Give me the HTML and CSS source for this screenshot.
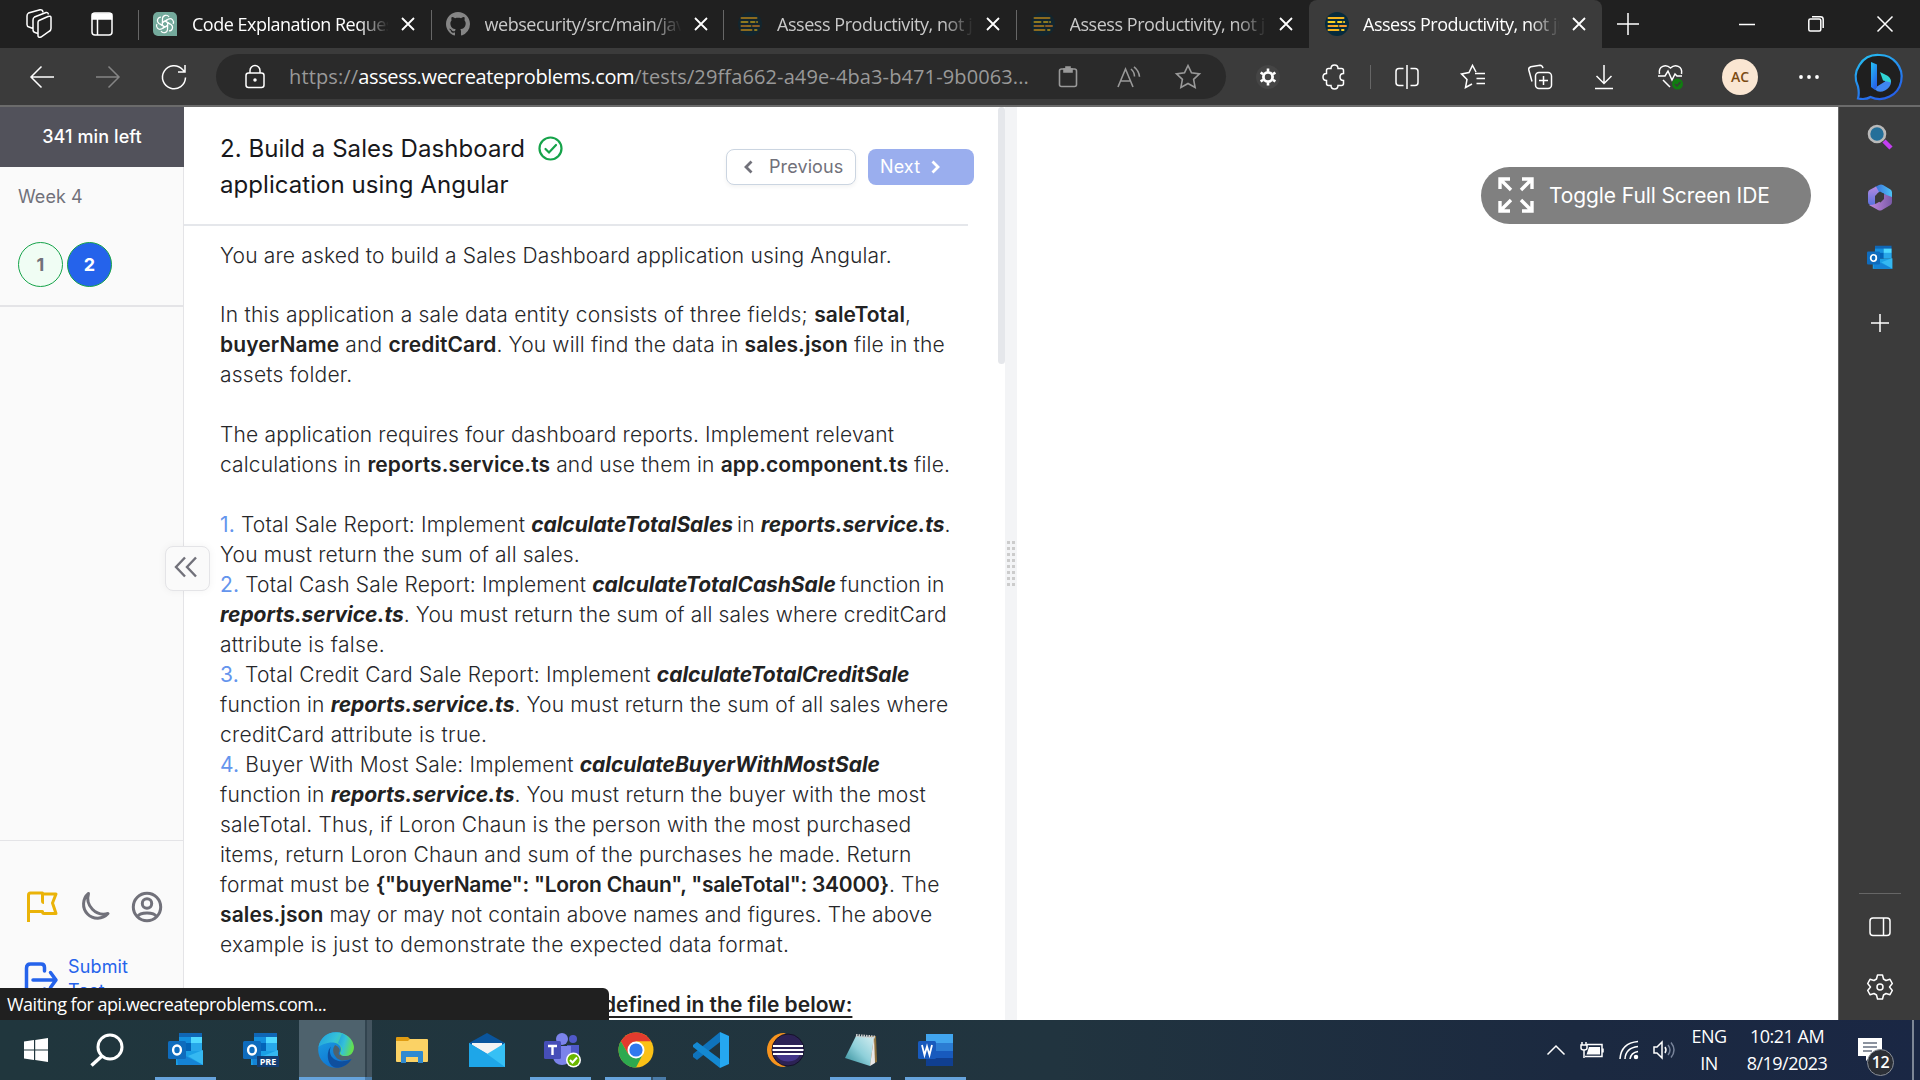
FILE: index.html
```html
<!DOCTYPE html>
<html lang="en">
<head>
<meta charset="utf-8">
<title>Assess Productivity</title>
<link rel="stylesheet" href="styles.css">
</head>
<body>
<svg class="defs" aria-hidden="true">
  <defs>
    <linearGradient id="bing" x1="0" y1="0" x2="0.5" y2="1"><stop offset="0" stop-color="#25c3f2"/><stop offset="1" stop-color="#2563eb"/></linearGradient>
    <linearGradient id="edgeA" x1="0" y1="0" x2="1" y2="0.4"><stop offset="0" stop-color="#1e9de0"/><stop offset="0.5" stop-color="#35c1d8"/><stop offset="1" stop-color="#63e04f"/></linearGradient>
    <linearGradient id="edgeB" x1="0" y1="0" x2="0.6" y2="1"><stop offset="0" stop-color="#1ea4e4"/><stop offset="1" stop-color="#0d6fd0"/></linearGradient>
    <linearGradient id="sheet" x1="0" y1="1" x2="1" y2="0"><stop offset="0" stop-color="#2b8794"/><stop offset="0.5" stop-color="#8fd0da"/><stop offset="1" stop-color="#d5eef1"/></linearGradient>
    <linearGradient id="loopA" x1="0" y1="0" x2="1" y2="0"><stop offset="0" stop-color="#3b6fd8"/><stop offset="1" stop-color="#4cc3f7"/></linearGradient>
    <linearGradient id="loopB" x1="0" y1="0" x2="0" y2="1"><stop offset="0" stop-color="#b58ae0"/><stop offset="1" stop-color="#4f6fe0"/></linearGradient>
    <linearGradient id="loopC" x1="0" y1="0" x2="1" y2="0"><stop offset="0" stop-color="#c48ae0"/><stop offset="1" stop-color="#7a5aa8"/></linearGradient>
    <symbol id="x" viewBox="0 0 16 16"><path d="M2 2l12 12M14 2L2 14" stroke="currentColor" stroke-width="1.8"/></symbol>
    <symbol id="assess" viewBox="0 0 24 24"><circle cx="12" cy="12" r="12" fill="#062b3d"/><g stroke-width="2" stroke-linecap="round"><path d="M3.500 6h15M3.500 14h9M3.500 18h10" stroke="#f5b51f"/><path d="M3.500 10h6M13 10h3.500M19 10h.1M17 18h1.500" stroke="#fbd321"/><path d="M15 14h6M5 14h3" stroke="#f59a2e"/></g></symbol>
    <symbol id="outlook" viewBox="0 0 36 36"><path d="M11 1h23v17H11z" fill="#1066b5"/><path d="M11 5h12v6H11z" fill="#1490df"/><path d="M23 5h11v6H23z" fill="#50d9ff"/><path d="M11 11h12v8H11z" fill="#0364b8"/><path d="M23 11h11v8H23z" fill="#28a8ea"/><path d="M8 33V19h27v14z" fill="#1a9fe5"/><path d="M35 18v15L20 24z" fill="#35b8f1"/><path d="M8 19l27 14H10z" fill="#1583d5"/><rect x="0" y="9" width="18" height="18" rx="1.500" fill="#0f6cbd"/><ellipse cx="9" cy="18" rx="3.900" ry="4.500" fill="none" stroke="#fff" stroke-width="2.400"/></symbol>
  </defs>
</svg>
<div class="screen">
  <header class="tabstrip">
    <div class="tab-actions">
      <svg width="26" height="30" viewBox="0 0 26 30" class="line"><path d="M13 11.500l9-4q3-1 3 1v11q0 2-2 3L15 28q-3 1-3-1.500V13.500q0-1.500 1-2z"/><path d="M12 24.500l-3-1q-2-.5-2-3V11q0-2 1.500-3L20 3.500q2-.5 2.500 2M7 19.500l-4-1.500q-2-.5-2-2.500V7q0-2 1.500-3L14 .800q2.500-.5 3 2.500"/></svg>
      <svg width="22" height="26" viewBox="0 0 22 26" class="line"><rect x="1" y="2" width="20" height="22" rx="3"/><path d="M1.500 3h19v5h-19z" fill="#fff"/><path d="M6.500 8v16"/></svg>
    </div>
    <div class="tab">
      <svg class="favicon" viewBox="0 0 24 24"><path d="M5 0h14a5 5 0 015 5v19H5a5 5 0 01-5-5V5a5 5 0 015-5z" fill="#74aa9c"/><g fill="none" stroke="#fff" stroke-width="1.200"><path id="kn" d="M9.500 10.500V6.500a3.500 3.500 0 016.500-1.500M9.500 10.500l2.500-1.500 5 3"/><use href="#kn" transform="rotate(60 12 12)"/><use href="#kn" transform="rotate(120 12 12)"/><use href="#kn" transform="rotate(180 12 12)"/><use href="#kn" transform="rotate(240 12 12)"/><use href="#kn" transform="rotate(300 12 12)"/></g></svg>
      <span class="tab-title bright">Code Explanation Request</span><svg class="close"><use href="#x"/></svg>
    </div>
    <div class="tab">
      <svg class="favicon" viewBox="0 0 16 16"><path fill="#858585" d="M8 0C3.580 0 0 3.580 0 8c0 3.540 2.290 6.530 5.470 7.590.4.070.55-.17.55-.38 0-.19-.01-.82-.01-1.490-2.010.37-2.530-.49-2.690-.94-.09-.23-.48-.94-.82-1.130-.28-.15-.68-.52-.01-.53.63-.01 1.080.58 1.230.82.72 1.210 1.870.87 2.330.66.07-.52.28-.87.51-1.070-1.780-.2-3.640-.89-3.640-3.950 0-.87.31-1.590.82-2.150-.08-.2-.36-1.020.08-2.120 0 0 .67-.21 2.200.82.64-.18 1.320-.27 2-.27s1.360.09 2 .27c1.530-1.040 2.200-.82 2.200-.82.44 1.100.16 1.920.08 2.120.51.56.82 1.270.82 2.150 0 3.070-1.870 3.750-3.650 3.950.29.25.54.73.54 1.480 0 1.070-.01 1.930-.01 2.200 0 .21.15.46.55.38A8.010 8.010 0 0016 8c0-4.420-3.580-8-8-8z"/></svg>
      <span class="tab-title">websecurity/src/main/java</span><svg class="close"><use href="#x"/></svg>
    </div>
    <div class="tab"><svg class="favicon dim"><use href="#assess"/></svg><span class="tab-title">Assess Productivity, not just</span><svg class="close"><use href="#x"/></svg></div>
    <div class="tab"><svg class="favicon dim"><use href="#assess"/></svg><span class="tab-title">Assess Productivity, not just</span><svg class="close"><use href="#x"/></svg></div>
    <div class="tab active"><svg class="favicon"><use href="#assess"/></svg><span class="tab-title bright">Assess Productivity, not just</span><svg class="close"><use href="#x"/></svg></div>
    <svg class="new-tab line" width="22" height="22" viewBox="0 0 22 22"><path d="M11 0v22M0 11h22"/></svg>
    <div class="window-buttons">
      <svg width="16" height="16" viewBox="0 0 16 16" class="line"><path d="M0 8.500h16"/></svg>
      <svg width="16" height="16" viewBox="0 0 16 16" class="line"><rect x=".8" y="3" width="12" height="12" rx="1.500"/><path d="M4 .8h8.500q2.700 0 2.700 2.700V12"/></svg>
      <svg width="16" height="16" viewBox="0 0 16 16" class="line"><path d="M.5.500l15 15M15.500.500l-15 15"/></svg>
    </div>
  </header>

  <div class="toolbar">
    <div class="nav-buttons">
      <svg width="26" height="26" viewBox="0 0 26 26" class="line"><path d="M25 13H2M12.500 2.500L2 13l10.500 10.500"/></svg>
      <svg width="26" height="26" viewBox="0 0 26 26" class="line faded"><path d="M1 13h23M13.500 2.500L24 13 13.500 23.500"/></svg>
      <svg width="26" height="26" viewBox="0 0 26 26" class="line"><path d="M24.500 13.500A11.500 11.500 0 1 1 21.500 5.500L24 8M24 1v7h-7"/></svg>
    </div>
    <div class="address">
      <svg width="20" height="24" viewBox="0 0 20 24" class="line"><rect x="1" y="8" width="18" height="14.500" rx="2.500"/><path d="M5 8V5.500a5 5 0 0110 0V8"/><circle cx="10" cy="15" r="1" fill="#fff"/></svg>
      <span class="url">https://<b>assess.wecreateproblems.com</b>/tests/29ffa662-a49e-4ba3-b471-9b0063...</span>
      <div class="address-icons">
        <svg width="20" height="22" viewBox="0 0 20 22"><rect x="1.500" y="3" width="17" height="17.500" rx="2"/><path d="M6 3h8v3H6zM8 1h4v3H8z" fill="#999"/></svg>
        <svg width="24" height="22" viewBox="0 0 24 22"><path d="M1 21L8.500 3 16 21M3.500 15h10M14 3q3.500 3 3.500 7.500M17 .8q5 4 5.500 10"/></svg>
        <svg width="26" height="25" viewBox="0 0 26 25"><path d="M13 1.500l3.500 7.300 8 1.100-5.900 5.500 1.500 8L13 19.500l-7.100 3.900 1.500-8L1.500 9.900l8-1.100z"/></svg>
      </div>
    </div>
    <div class="extensions">
      <svg width="24" height="24" viewBox="0 0 24 24"><circle cx="12" cy="12" r="12" fill="#454545"/><circle cx="12" cy="12" r="4.600" fill="none" stroke="#fff" stroke-width="2.800"/><path d="M12 3.500v3M12 17.500v3M4.600 7.700l2.600 1.500M16.800 14.800l2.600 1.500M19.400 7.700l-2.600 1.500M7.200 14.800l-2.600 1.500" stroke="#fff" stroke-width="2.600"/></svg>
      <svg class="puzzle line" width="24" height="26" viewBox="0 0 24 26"><path d="M6.500 4.500H9Q9 1 12.500 1T16 4.500h3.500q2 0 2 2v3Q18 9.500 18 13t3.500 3.500v3q0 2-2 2H16q0 3.500-3.500 3.500T9 21.500H6.500q-2 0-2-2v-3Q1 16.500 1 13t3.500-3.500v-3q0-2 2-2z"/></svg>
      <i class="divider"></i>
      <svg width="24" height="24" viewBox="0 0 24 24" class="line"><path d="M12 0v24M8.500 3.500H4Q1 3.500 1 6.500v11q0 3 3 3h4.500M15.500 3.500H20q3 0 3 3v11q0 3-3 3h-4.500"/></svg>
      <svg width="26" height="25" viewBox="0 0 26 25" class="line"><path d="M16 8l-3.500-6.500L9 8.500l-7.500 1.400L7 15.500l-1.500 8L12 20M15 9.500h10M16.500 14.500H25M16.500 19.500H25" /></svg>
      <svg width="26" height="26" viewBox="0 0 26 26" class="line"><rect x="8.500" y="8.500" width="16" height="16" rx="3.500"/><path d="M16.500 12v9M12 16.500h9M5 17.500L1.800 6q-.5-2.500 2-3.300L13 1.200q2.300 0 3 3"/></svg>
      <svg width="20" height="26" viewBox="0 0 20 26" class="line"><path d="M10 1v18M2.500 12l7.500 7.500 7.500-7.500M1 24.500h18"/></svg>
      <svg class="heart line" width="28" height="28" viewBox="0 0 28 28"><path d="M2.500 11C1 3 9 .500 13.500 5 18 .500 26 3 24.500 11M1 13h7l3-5 4 9 3-6 2 2h5M6 17l7 7"/><circle cx="20.500" cy="21" r="5.500" fill="#107c10" stroke="none"/><path d="M18 21l2 2 3.500-4" stroke="#3a3a3a"/></svg>
      <span class="avatar">AC</span>
      <svg class="more" width="22" height="6" viewBox="0 0 22 6"><g fill="#fff"><circle cx="3" cy="3" r="1.900"/><circle cx="11" cy="3" r="1.900"/><circle cx="19" cy="3" r="1.900"/></g></svg>
      <svg class="bing" width="46" height="46" viewBox="0 0 46 46"><path d="M23 1a22 22 0 11-8.500 42Q10 46 2 44.500q1.500-5 0-12A22 22 0 0123 1z" fill="#1f1f1f" stroke="url(#bing)" stroke-width="2.200"/><path d="M15 8l6 2.500v22l-2 3.500-4-3z" fill="url(#bing)"/><path d="M31 22q4 2 4 7-1 5-6 7.500-6 3-10-1l2-3 8-5z" fill="#3f86f0"/><path d="M24 18l7 3.500q4 2 4 7l-8-2z" fill="#30d5d5"/></svg>
    </div>
  </div>

  <div class="browser-body">
    <main class="page">
      <aside class="sidebar">
        <div class="timer">341 min left</div>
        <section class="week"><p>Week 4</p><div class="questions"><span class="done">1</span><span class="current">2</span></div></section>
        <section class="side-foot">
          <div class="tools">
            <svg width="32" height="32" viewBox="0 0 32 32" stroke="#eab308"><path d="M2.500 31V4q0-2 2-2h12v8q0 1.500 1.500 1.500M16.500 3H30l-3.500 9L30 22.500H18q-1.500 0-1.500-2v0H2.500"/></svg>
            <svg width="32" height="32" viewBox="0 0 32 32" stroke="#71717a"><path d="M10.500 2.500A14 14 0 1030 22.500 16 16 0 0110.500 2.500z"/></svg>
            <svg width="32" height="32" viewBox="0 0 32 32" stroke="#71717a"><circle cx="16" cy="16" r="13.700"/><circle cx="16" cy="12.500" r="4.700"/><path d="M6.500 25.500q2-3.500 9.500-3.500t9.500 3.500"/></svg>
          </div>
          <div class="submit">
            <svg width="34" height="34" viewBox="0 0 34 34"><path d="M20.500 9V5.500q0-3.500-3.500-3.500H6.500Q2.500 2 2.500 6v24q0 3 4 3H17q3.500 0 3.500-3.500V27M9 18h22M26.500 10.500L32 18l-5.500 7.500"/></svg>
            <span>Submit Test</span>
          </div>
        </section>
        <button class="collapse"><svg width="24" height="22" viewBox="0 0 24 22"><path d="M11 1.500L2 11l9 9.500M22 1.500L13 11l9 9.500"/></svg></button>
      </aside>

      <section class="problem">
        <div class="problem-head">
          <h1>2. Build a Sales Dashboard<br>application using Angular</h1>
          <svg class="check" width="25" height="25" viewBox="0 0 25 25"><circle cx="12.500" cy="12.500" r="11"/><path d="M7.500 13l3.500 3.500 7-7.500"/></svg>
          <div class="pager">
            <button class="prev"><svg width="9" height="14" viewBox="0 0 9 14"><path d="M7.500 1.500L2 7l5.500 5.500"/></svg>Previous</button>
            <button class="next">Next<svg width="9" height="14" viewBox="0 0 9 14"><path d="M1.500 1.500L7 7l-5.500 5.500"/></svg></button>
          </div>
        </div>
        <div class="statement">
          <p>You are asked to build a Sales Dashboard application using Angular.</p>
          <p><span class="loose">In this application a sale data entity consists of three fields; </span><b>saleTotal</b>,<br><b>buyerName</b> and <b>creditCard</b>. You will find the data in <b>sales.json</b> file in the<br><span class="loose">assets folder.</span></p>
          <p>The application requires four dashboard reports. Implement relevant<br>calculations in <b>reports.service.ts</b> and use them in <b>app.component.ts</b> file.</p>
          <p><i>1.</i> Total Sale Report: Implement <em class="snug">calculateTotalSales</em> in <em>reports.service.ts</em>.<br>You must return the sum of all sales.<br>
          <i>2.</i> Total Cash Sale Report: Implement <em class="snug">calculateTotalCashSale</em> function in<br><em>reports.service.ts</em>. You must return the sum of all sales where creditCard<br><span class="looser">attribute is false.</span><br>
          <i>3.</i> <span class="loose">Total Credit Card Sale Report: Implement </span><em>calculateTotalCreditSale</em><br>function in <em>reports.service.ts</em>. You must return the sum of all sales where<br><span class="looser">creditCard attribute is true.</span><br>
          <i>4.</i> Buyer With Most Sale: Implement <em>calculateBuyerWithMostSale</em><br>function in <em>reports.service.ts</em>. <span class="loose">You must return the buyer with the most</span><br>saleTotal. Thus, if Loron Chaun is the person with the most purchased<br>items, return Loron Chaun and sum of the purchases he made. Return<br>format must be <b class="json">{"buyerName": "Loron Chaun", "saleTotal": 34000}</b>. The<br><b>sales.json</b> <span class="tight">may or may not contain above names and figures. The above</span><br><span class="looser">example is just to demonstrate the expected data format.</span></p>
          <p class="contract"><b><u>defined in the file below:</u></b></p>
        </div>
      </section>
      <div class="scroll-track"><div class="scroll-thumb"></div></div>
      <div class="gutter"><svg width="8" height="46" viewBox="0 0 8 46"><path d="M1.500 0v46M6.500 0v46" stroke="#ccc" stroke-width="3" stroke-dasharray="3 3"/></svg></div>
      <section class="ide">
        <button class="fullscreen"><svg width="36" height="36" viewBox="0 0 36 36"><path d="M2 12V2h10M2 2l11 11M24 2h10v10M34 2L23 13M2 24v10h10M2 34l11-11M34 24v10H24M34 34L23 23"/></svg>Toggle Full Screen IDE</button>
      </section>
      <div class="status">Waiting for api.wecreateproblems.com...</div>
    </main>
    <aside class="edge-bar">
      <svg width="26" height="26" viewBox="0 0 26 26"><path d="M17 17l7 7" stroke="#c43df2" stroke-width="4.500"/><circle cx="10" cy="10" r="8" fill="#246f99" stroke="#b9b9b9" stroke-width="2.600"/></svg>
      <svg width="26" height="27" viewBox="0 0 26 27"><path d="M8 3l4-2q2-1 4 0l7.500 4.500Q25 6.500 25 8.500V16l-9-7-6-1z" fill="url(#loopA)"/><path d="M9 2.500L2.500 6Q1 7 1 9v9q0 2 2 3l5 2V12l4-4z" fill="url(#loopB)"/><path d="M25 13v5q0 2-1.500 3L15 26q-2 1-4 0l-9-5q8 0 13-6l2-5z" fill="url(#loopC)"/><path d="M10 10l3-2.500 4 2.500v5l-3.500 3.500L9 16z" fill="#3a3a3a"/></svg>
      <svg width="26" height="26"><use href="#outlook"/></svg>
      <svg class="add" width="20" height="20" viewBox="0 0 20 20"><path d="M10 1v18M1 10h18"/></svg>
      <div class="edge-foot">
        <svg width="22" height="20" viewBox="0 0 22 20" class="line"><rect x="1" y="1" width="20" height="17.500" rx="3"/><path d="M14.500 1v17.500"/></svg>
        <svg width="26" height="26" viewBox="0 0 26 26" class="line"><path d="M10.500 1h5l1 4 2.500 1.500 4-1.200 2.300 4.200-2.800 3.500 2.800 3.500-2.300 4.200-4-1.200-2.500 1.500-1 4h-5l-1-4L7 19.500l-4 1.200L.7 16.500 3.500 13 .7 9.500 3 5.300l4 1.200L9.500 5z" stroke-linejoin="round"/><circle cx="13" cy="13" r="3"/></svg>
      </div>
    </aside>
  </div>

  <footer class="taskbar">
    <div class="apps">
      <div class="app start"><svg width="24" height="24" viewBox="0 0 24 24"><path fill="#fff" d="M0 3.500l10-1.400v9.400H0zM11.200 2L24 0v11.500H11.200zM0 12.600h10V22L0 20.600zM11.200 12.600H24V24l-12.800-1.900z"/></svg></div>
      <div class="app search"><svg width="34" height="34" viewBox="0 0 34 34"><circle cx="20" cy="14" r="12" fill="none" stroke="#fff" stroke-width="3"/><path d="M12 23L1.500 32.500" stroke="#fff" stroke-width="3.500"/></svg></div>
      <div class="app open"><svg width="36" height="36"><use href="#outlook"/></svg></div>
      <div class="app"><svg width="36" height="36" viewBox="0 0 36 36"><use href="#outlook" width="36" height="36"/><rect x="14" y="24" width="22" height="11" fill="#123d73"/><text x="25" y="32.500" text-anchor="middle" class="pre">PRE</text></svg></div>
      <div class="app focused"><svg width="36" height="36" viewBox="0 0 36 36"><circle cx="18" cy="18" r="17.800" fill="url(#edgeB)"/><path d="M24 14c4 0 5 7-2 8-1 5 4 7 14 5V10z" fill="#4e626d"/><path d="M.5 15C2 6 9 .2 18 .2c10 0 17.800 7 17.800 14.800 0 6-4 9-8.500 9-5 0-6-2-5-4 2-3 0-9-7-9.500C8 10.300 3 13 .5 15z" fill="url(#edgeA)"/><path d="M13 14.500c-4 9 4 16 13 14.500 3 0 6-1.500 7.500-2-3 5.500-9 8.800-15.500 8.800C9 34 7.500 20 13 14.500z" fill="#0f4f9e"/><path d="M17 13q-3.500 5-.5 10 2 4 7 5.500 4 .5 9-2l2-.5V24q-3 1-8 1-4-.5-5.500-2.500-1-1.500.5-3 1-4-4.500-6.500z" fill="#4e626d"/><path d="M20 11q6 5 3 9-1.500 3 4.500 4 8-.5 8.300-9Q34 6 24 1.500z" fill="url(#edgeA)"/></svg></div>
      <div class="app"><svg width="34" height="28" viewBox="0 0 34 28"><path d="M1 5V2q0-1 1-1h11l3 3v1z" fill="#e09c12"/><path d="M1 5h12l2-2h17q1 0 1 1v21q0 1-1 1H2q-1 0-1-1z" fill="#fbd265"/><path d="M6 27V16q0-1 1-1h20q1 0 1 1v11h-5v-6H11v6z" fill="#2f8ad0"/></svg></div>
      <div class="app"><svg width="36" height="34" viewBox="0 0 36 34"><path d="M0 10L18 0l18 10v12H0z" fill="#0a559d"/><path d="M3 10h30v8L18 24 3 18z" fill="#f3f3f3"/><path d="M0 10l22 13L36 34H0z" fill="#1c95dd"/><path d="M36 10L18 21 0 34h36z" fill="#36c0f5"/><path d="M0 10l18 11 18 13H0z" fill="#1ea6e8"/></svg></div>
      <div class="app open"><svg width="38" height="36" viewBox="0 0 38 36"><circle cx="19" cy="7" r="6" fill="#7b83eb"/><circle cx="30" cy="7" r="4" fill="#5059c9"/><path d="M24 13h12v11q-2 6-8 6h-4z" fill="#5059c9"/><path d="M10 14h18v12q-2 7-9 7t-9-7z" fill="#7b83eb"/><rect x="1" y="9" width="17" height="18" rx="1.500" fill="#464eb8"/><path d="M5 14h9M9.500 14v9" stroke="#fff" stroke-width="2.400"/><circle cx="30.500" cy="28" r="7.500" fill="#fff"/><circle cx="30.500" cy="28" r="6" fill="#6bb700"/><path d="M27 28l2.500 2.500 4.500-5" stroke="#fff" stroke-width="2" fill="none"/></svg></div>
      <div class="app open split"><svg width="36" height="36" viewBox="0 0 36 36"><circle cx="18" cy="18" r="17.500" fill="#fbc116"/><path d="M2.800 9.300A17.500 17.500 0 0133.200 9.300H18L10.500 22.500z" fill="#e33b2e"/><path d="M2.800 9.300L10.500 22.500 25 22 18 35.500A17.500 17.500 0 012.800 9.300z" fill="#2da94f"/><circle cx="18" cy="18" r="8.500" fill="#fff"/><circle cx="18" cy="18" r="6.600" fill="#3079ed"/></svg></div>
      <div class="app"><svg width="36" height="36" viewBox="0 0 36 36"><path d="M27 0v10L4 28l-4-3v-3z" fill="#0f73bb"/><path d="M0 13l4-3 23 17v9L0 15z" fill="#1489d2"/><path d="M27 0l9 4v28l-9 4z" fill="#25a7f0"/></svg></div>
      <div class="app"><svg width="36" height="34" viewBox="0 0 36 34"><path d="M16 0a17 17 0 000 34l4-2V2z" fill="#f7941e"/><circle cx="20" cy="17" r="16" fill="#2c2255" stroke="#15122a"/><path d="M8 21.500h24q-3 7-12 7t-12-7z" fill="#43368a"/><path d="M5 13h30M4.500 17h31M5 21h30" stroke="#fff" stroke-width="2"/></svg></div>
      <div class="app open"><svg width="34" height="34" viewBox="0 0 34 34"><path d="M25 3h7l1 26-8 3z" fill="#8d713c"/><path d="M12 3l18 1-4 29L1 25z" fill="url(#sheet)"/><path d="M30 4l1 26-5 3z" fill="#e9e9e9"/><path d="M12 2.500l19 1.500" stroke="#ccc" stroke-width="3" stroke-dasharray="1.500 1"/></svg></div>
      <div class="app open"><svg width="36" height="34" viewBox="0 0 36 34"><path d="M8 1h27v9H8z" fill="#41a5ee"/><path d="M8 10h27v8H8z" fill="#2b7cd3"/><path d="M8 18h27v7H8z" fill="#185abd"/><path d="M8 25h27v8H8z" fill="#103f91"/><rect y="8" width="18" height="18" rx="1.500" fill="#185abd"/><path d="M4 12l2.500 10L9 13.500l2.500 8.500L14 12" fill="none" stroke="#fff" stroke-width="1.800"/></svg></div>
    </div>
    <div class="tray">
      <svg width="18" height="10" viewBox="0 0 18 10" class="line"><path d="M.5 9.500L9 1l8.500 8.500"/></svg>
      <svg width="24" height="18" viewBox="0 0 24 18" class="line"><path d="M7 3.500h15v12H5M23 7.500v4M2 1v3M6 1v3M4 9v8"/><path d="M1 4h6v3Q7 9 4 9T1 7z"/><path d="M9 6h11v7.500H6.500z" fill="#fff" stroke="none"/></svg>
      <svg width="20" height="20" viewBox="0 0 20 20" class="line"><path d="M1 19Q2 3 19 1.500M6 19Q6.500 8 19 6.500M11 19q1-6.500 8-7.500"/><circle cx="17" cy="17" r="1.500" fill="#fff"/></svg>
      <svg width="22" height="20" viewBox="0 0 22 20" class="line"><path d="M1 7h3l5-5v16l-5-5H1zM12 7q2 3 0 6"/><path d="M15 5q4 5 0 10M18 2.500q6 7.500 0 15" stroke="#77839a"/></svg>
      <div class="lang">ENG<br>IN</div>
      <div class="clock">10:21 AM<br>8/19/2023</div>
      <div class="notice"><svg width="24" height="24" viewBox="0 0 24 24"><path d="M0 0h24v18H13l-5 5v-5H0z" fill="#fff"/><path d="M5 5h14M5 9h14M5 13h9" stroke="#1b2940" stroke-width="1.200"/></svg><span>12</span></div>
      <i class="peek"></i>
    </div>
  </footer>
</div>
</body>
</html>
```
FILE: styles.css
```css
* { box-sizing: border-box; }
body { margin: 0; font-family: Inter, sans-serif; background: #fff; }
button { font: inherit; border: 0; padding: 0; }
svg { flex: none; display: block; overflow: visible; }
.defs { width: 0; height: 0; }
.line { fill: none; stroke: #fff; stroke-width: 1.5; }
.line.faded { stroke: #858585; }
.screen { width: 1920px; height: 1080px; display: flex; flex-direction: column; overflow: hidden; }

.tabstrip { height: 48px; flex: none; background: #202020; display: flex; align-items: center; font-family: "Open Sans", sans-serif; }
.tab-actions { width: 138px; flex: none; padding-left: 26px; display: flex; align-items: center; gap: 39px; }
.tab { width: 292.500px; height: 48px; flex: none; padding-left: 15px; display: flex; align-items: center; position: relative; color: #c9c9c9; }
.tab::before { content: ""; position: absolute; left: 0; top: 10px; width: 1px; height: 30px; background: #666; }
.tab.active { background: #3b3b3b; border-radius: 8px 8px 0 0; margin-left: 1px; padding-left: 16px; }
.tab.active::before { display: none; }
.favicon { width: 24px; height: 24px; }
.favicon.dim { opacity: .5; }
.tab-title { width: 196px; margin: 0 12px 0 15px; overflow: hidden; white-space: nowrap; font-size: 18px; letter-spacing: -.45px; line-height: 26px; -webkit-mask-image: linear-gradient(90deg, #000 166px, transparent 197px); mask-image: linear-gradient(90deg, #000 166px, transparent 197px); }
.active .tab-title { width: 196px; margin-left: 14px; }
.bright { color: #fff; letter-spacing: -.5px; }
.close { width: 16px; height: 16px; color: #fff; }
.new-tab { margin-left: 15px; }
.window-buttons { margin: 0 27px 0 auto; display: flex; gap: 53px; }

.toolbar { height: 59px; flex: none; background: #3b3b3b; border-bottom: 2px solid #6b6b6b; display: flex; align-items: center; }
.nav-buttons { width: 216px; padding-left: 29px; display: flex; gap: 40px; }
.address { width: 1010px; height: 45px; border-radius: 23px; background: #2a2a2a; display: flex; align-items: center; padding: 0 25px 0 29px; }
.url { margin-left: 24px; width: 742px; white-space: nowrap; font: 20px/30px "Open Sans", sans-serif; letter-spacing: .12px; color: #999; }
.url b { font-weight: 400; color: #fff; letter-spacing: -.34px; }
.address-icons { margin-left: auto; display: flex; align-items: center; gap: 36px; fill: none; stroke: #999; stroke-width: 1.6; }
.address-icons svg:nth-child(2) { margin: 0 -2px 0 3px; }
.extensions { flex: 1; display: flex; align-items: center; gap: 41px; padding-left: 30px; }
.puzzle { margin: 0 -1px 0 1px; }
.divider { width: 1px; height: 24px; flex: none; margin: 0 -17px 0 -16px; background: #666; }
.heart { margin-left: 2px; }
.avatar { width: 36px; height: 36px; flex: none; margin: 0 -1px 0 -4px; border-radius: 50%; background: #fae6d2; color: #7b4a12; font: 600 14px/36px "Open Sans", sans-serif; text-align: center; }
.bing { margin-left: -5px; }

.browser-body { flex: 1; min-height: 0; display: flex; background: #3b3b3b; }
.page { width: 1839px; background: #fff; border-right: 1px solid #666; display: flex; position: relative; overflow: hidden; }
.sidebar { width: 184px; flex: none; background: #fafafa; border-right: 1px solid #e4e4e7; display: flex; flex-direction: column; position: relative; }
.timer { width: 184px; height: 60px; flex: none; background: #52525b; color: #fff; font-weight: 500; font-size: 18px; line-height: 60px; text-align: center; letter-spacing: .1px; }
.week { height: 140px; border-bottom: 2px solid #e4e4e7; padding: 16px 18px; color: #71717a; font-size: 18px; }
.week p { margin: 0 0 31px; line-height: 28px; letter-spacing: .05px; }
.questions { display: flex; gap: 4px; }
.questions span { width: 45px; height: 45px; border: 1px solid #16a34a; border-radius: 50%; line-height: 43px; text-align: center; font-weight: 700; }
.done { background: #f0fdf4; }
.current { background: #2563eb; color: #fff; }
.side-foot { margin-top: auto; height: 180px; border-top: 1px solid #e4e4e7; padding: 50px 0 0 26px; flex: none; }
.tools { display: flex; gap: 20px; fill: none; stroke-width: 3; stroke-linejoin: round; }
.tools svg:last-child { margin-left: 1px; }
.submit { margin-top: 32px; display: flex; gap: 10px; color: #2563eb; font-size: 18px; line-height: 24px; letter-spacing: .15px; width: 130px; }
.submit svg { margin-top: 7px; margin-left: -2px; fill: none; stroke: #2563eb; stroke-width: 3.500; stroke-linecap: round; stroke-linejoin: round; }
.collapse { position: absolute; left: 165px; top: 439px; width: 45px; height: 45px; border: 1px solid #e4e4e7; border-radius: 8px; background: #fafafa; display: grid; place-items: center; z-index: 2; box-shadow: 0 0 8px #0000000d; }
.collapse svg { fill: none; stroke: #71717a; stroke-width: 2.400; margin: -4px 4px 0 0; }

.problem { width: 814px; flex: none; overflow: hidden; }
.problem-head { width: 784px; height: 119px; padding: 24px 0 0 36px; border-bottom: 2px solid #e5e7eb; display: flex; align-items: flex-start; }
h1 { margin: 0; font-weight: 400; font-size: 24px; line-height: 36px; letter-spacing: .06px; color: #18181b; white-space: nowrap; width: 318px; }
.check { margin: 5px 0 0 0; fill: none; stroke: #16a34a; stroke-width: 2.200; stroke-linecap: round; }
.pager { margin: 18px -6px 0 auto; display: flex; gap: 12px; font-size: 18px; flex: none; }
.pager button { height: 36px; border-radius: 8px; display: flex; align-items: center; letter-spacing: .1px; padding-bottom: 1px; }
.pager svg { fill: none; stroke: currentColor; stroke-width: 2.800; }
.pager .prev { width: 130px; border: 1px solid #cbd5e1; background: #fff; color: #71717a; padding-left: 17px; gap: 16px; box-shadow: 0 2px 4px #0000000d; }
.pager .next { width: 106px; background: #9aaeee; color: #fff; padding-left: 12px; gap: 11px; }
.statement { padding: 15px 0 0 36px; font-size: 21px; font-weight: 300; line-height: 30px; letter-spacing: .16px; color: #27272a; white-space: nowrap; }
.statement p { margin: 0 0 30px; }
.statement p:first-child { margin-bottom: 29px; }
.statement b { font-weight: 600; letter-spacing: .1px; color: #222; }
.statement em { font-weight: 700; letter-spacing: -.03px; color: #222; }
.statement .snug { margin-right: -2px; }
.statement .json { letter-spacing: -.24px; }
.tight { letter-spacing: .11px; }
.loose { letter-spacing: .23px; }
.looser { letter-spacing: .29px; }
.statement i { font-style: normal; color: #6495ed; font-weight: 400; }
.statement .contract { padding-left: 383px; }
.contract b { letter-spacing: 0; }
.contract u { text-underline-offset: 4px; }
.scroll-track { width: 7px; flex: none; }
.scroll-thumb { height: 257px; border-radius: 4px; background: #e5e7eb; }
.gutter { width: 12px; flex: none; background: #f3f4f6; display: flex; align-items: center; justify-content: center; }
.ide { flex: 1; padding: 60px 27px; display: flex; justify-content: flex-end; }
.fullscreen { width: 330px; height: 57px; border-radius: 29px; background: #808080; color: #fff; font-size: 21px; letter-spacing: -.1px; display: flex; align-items: center; padding: 0 0 1px 17px; gap: 15px; white-space: nowrap; }
.fullscreen svg { fill: none; stroke: #fff; stroke-width: 3.400; }
.status { position: absolute; left: 0; bottom: 0; width: 609px; height: 32px; background: #202020; color: #fff; border-radius: 0 6px 0 0; padding-left: 7px; font: 18px/32px "Open Sans", sans-serif; letter-spacing: -.5px; z-index: 3; }

.edge-bar { flex: 1; display: flex; flex-direction: column; align-items: center; padding-top: 17px; gap: 34px; }
.add { margin-top: 8px; fill: none; stroke: #fff; stroke-width: 1.5; }
.edge-foot { margin-top: auto; width: 42px; height: 127px; border-top: 1px solid #666; display: flex; flex-direction: column; align-items: center; padding-top: 23px; gap: 37px; }

.taskbar { height: 60px; flex: none; background: linear-gradient(90deg, #20363d, #21343f 55%, #1b2940 82%, #1a2744); display: flex; justify-content: space-between; color: #fff; }
.apps { display: flex; }
.app { width: 74.900px; display: grid; place-items: center; position: relative; }
.app.start { width: 71px; }
.app.search { width: 77.500px; padding-right: 6px; }
.open::after { content: ""; position: absolute; bottom: 0; left: 6px; width: 61px; height: 3px; background: #66a3dc; }
.split::after { background: linear-gradient(90deg, #66a3dc 46px, #35526a 46px 48px, #4a7ba8 48px); }
.focused { background: linear-gradient(90deg, #4e626d 66px, #32444f 66px 68px, #43545f 68px); width: 73px; margin-left: 1px; margin-right: 2px; }
.focused::after { content: ""; position: absolute; bottom: 0; left: 0; width: 73px; height: 3px; background: linear-gradient(90deg, #66a3dc 66px, #4a7ba8 66px); }
.pre { font: 700 9px "Open Sans", sans-serif; fill: #fff; }
.tray { display: flex; align-items: center; font: 18px/27px "Open Sans", sans-serif; width: 373px; letter-spacing: -.5px; text-align: center; }
.tray > svg:nth-child(1) { margin-right: 15px; }
.tray > svg:nth-child(2) { margin-right: 15px; }
.tray > svg:nth-child(3) { margin-right: 14px; }
.lang { width: 68px; }
.clock { width: 88px; }
.notice { margin: 0 0 0 27px; width: 42px; height: 24px; position: relative; flex: none; }
.notice span { position: absolute; left: 9px; top: 11px; width: 27px; height: 27px; border-radius: 50%; border: 1px solid #8a8f98; background: #2b2f36; font-weight: 600; font-size: 16px; line-height: 25px; }
.peek { width: 2px; height: 60px; background: #7c8696; margin-left: auto; margin-right: 6px; }
```
